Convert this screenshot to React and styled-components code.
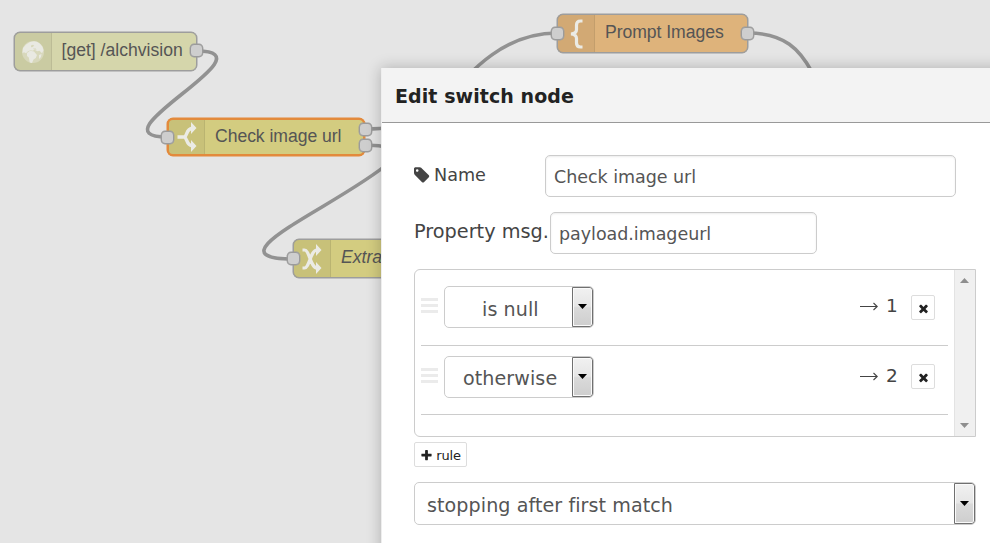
import React from 'react';
import styled, { createGlobalStyle, css } from 'styled-components';

const Global = createGlobalStyle`
  * { box-sizing: border-box; }
  body { margin: 0; background: #e5e5e5; overflow: hidden; }
`;

const verdana = css`font-family: Verdana, "DejaVu Sans", sans-serif;`;

const Workspace = styled.main`
  position: relative;
  width: 990px;
  height: 543px;
  overflow: hidden;
  background: #e5e5e5;
`;

const Wires = styled.svg`
  position: absolute;
  inset: 0;
  fill: none;
  stroke: #929292;
  stroke-width: 3.6;
`;

const NodeBox = styled.div`
  position: absolute;
  left: ${(p) => p.$x}px;
  top: ${(p) => p.$y}px;
  width: ${(p) => p.$w}px;
  height: ${(p) => p.$h || 39}px;
  display: flex;
  border: ${(p) => (p.$selected ? '2px solid #e38a3c' : '1px solid #9d9d9d')};
  box-shadow: 0 0 0 0.5px ${(p) => (p.$selected ? '#e38a3c' : '#9d9d9d')};
  border-radius: 6px;
  background: ${(p) => p.$fill};
`;

const NodeIcon = styled.div`
  display: flex;
  align-items: center;
  justify-content: center;
  flex: none;
  width: ${(p) => p.$w}px;
  background: rgba(0, 0, 0, 0.05);
  border-right: 1px solid rgba(0, 0, 0, 0.07);
  border-radius: 4px 0 0 4px;
  svg { display: block; flex: none; }
`;

const NodeLabel = styled.span`
  padding: ${(p) => p.$pt}px 0 0 ${(p) => p.$pl}px;
  font: ${(p) => (p.$italic ? 'italic' : 'normal')} 17.6px/20px "Liberation Sans", Arial, sans-serif;
  letter-spacing: ${(p) => p.$ls || 0}px;
  color: #555;
  white-space: nowrap;
`;

const Port = styled.i`
  position: absolute;
  left: ${(p) => p.$x}px;
  top: ${(p) => p.$y}px;
  width: 13px;
  height: 13px;
  border: 1px solid #9b9b9b;
  box-shadow: 0 0 0 0.4px #9b9b9b;
  border-radius: 4px;
  background: #cecece;
`;

const Dialog = styled.section`
  position: absolute;
  left: 381px;
  top: 68px;
  width: 640px;
  height: 520px;
  border-left: 1px solid #eee;
  background: #fff;
  box-shadow: 0 0 14px rgba(0, 0, 0, 0.24);
  ${verdana}
  color: #444;
`;

const Header = styled.header`
  height: 55px;
  padding: 16px 0 0 13px;
  background: #f3f3f3;
  border-bottom: 1px solid #999;
`;

const Title = styled.h1`
  margin: 0;
  font-size: 19px;
  line-height: 24px;
  letter-spacing: 0.08px;
  color: #222;
`;

const Form = styled.form`
  width: 594px;
  padding: 32px 0 0 32px;
`;

const Field = styled.div`
  display: flex;
  height: 42px;
  margin-bottom: 15px;
`;

const Label = styled.label`
  display: flex;
  flex: none;
  width: ${(p) => p.$w}px;
  padding-top: 8px;
  font-size: ${(p) => p.$size}px;
  line-height: 24px;
  white-space: nowrap;
  svg { margin: 3px 2px 0 0; }
`;

const Input = styled.input`
  width: ${(p) => p.$w}px;
  height: 42px;
  padding: 1px 8px 0;
  border: 1px solid #ccc;
  border-radius: 5px;
  outline: 0;
  background: #fff;
  box-shadow: inset 0 1px 2px rgba(0, 0, 0, 0.08);
  ${verdana}
  font-size: 17.5px;
  letter-spacing: -0.04px;
  color: #555;
`;

const RuleList = styled.div`
  display: flex;
  width: 562px;
  height: 168px;
  border: 1px solid #ccc;
  border-radius: 6px 0 0 6px;
`;

const Rules = styled.div`
  width: 527px;
  margin-left: 6px;
`;

const Rule = styled.div`
  display: flex;
  height: ${(p) => p.$h}px;
  padding-top: ${(p) => p.$pt}px;
  border-bottom: 1px solid #ccc;
`;

const Handle = styled.i`
  flex: none;
  width: 17px;
  height: 15px;
  margin: 12px 6px 0 0;
  background: repeating-linear-gradient(#ebebeb 0 3px, transparent 3px 6px);
`;

const SelectBox = styled.div`
  display: flex;
  flex: none;
  width: ${(p) => p.$w}px;
  height: ${(p) => p.$h}px;
  border: 1px solid #ccc;
  border-radius: 5px;
  overflow: hidden;
  font-size: 19.1px;
  line-height: 24px;
  color: #555;
`;

const SelectText = styled.span`
  flex: 1;
  padding: ${(p) => p.$pt}px 0 0 ${(p) => p.$pl}px;
  letter-spacing: 0.08px;
  white-space: nowrap;
`;

const DropButton = styled.span`
  display: flex;
  align-items: center;
  justify-content: center;
  width: 21px;
  padding-bottom: 1px;
  border: 1px solid #707070;
  border-radius: 0 3px 3px 0;
  box-shadow: inset 0 0 0 1px #fafafa;
  background: linear-gradient(#f1f1f1, #e6e6e6 48%, #dadada 52%, #cecece);
`;

const Output = styled.span`
  display: flex;
  width: 51px;
  margin-left: 266px;
  padding-top: 8px;
  font-size: 18.5px;
  line-height: 24px;
  svg { margin: 8px 8px 0 0; flex: none; }
`;

const SmallButton = styled.button`
  display: flex;
  align-items: center;
  justify-content: center;
  width: ${(p) => p.$w}px;
  height: 25px;
  margin: ${(p) => p.$mt}px 0 0;
  padding: 1px 0 0;
  gap: 3px;
  border: 1px solid #ddd;
  border-radius: 2px;
  background: #fff;
  ${verdana}
  font-size: 13px;
  letter-spacing: -0.2px;
  color: #222;
`;

const Scrollbar = styled.div`
  display: flex;
  flex-direction: column;
  justify-content: space-between;
  align-items: center;
  width: 21px;
  margin-left: 6px;
  padding: 8px 2px 8px 0;
  background: #f0f0f0;
  border-left: 1px solid #e3e3e3;
`;

const Spacer = styled.div`
  height: 15px;
`;

const PATHS = {
  tag: 'M448 448q0-53-37.5-90.5t-90.5-37.5-90.5 37.5-37.5 90.5 37.5 90.5 90.5 37.5 90.5-37.5 37.5-90.5zm1067 576q0 53-37 90l-491 492q-39 37-91 37-53 0-90-37l-715-716q-38-37-64.5-101t-26.5-117v-416q0-52 38-90t90-38h416q53 0 117 26.5t102 64.5l715 714q37 39 37 91z',
  plus: 'M1600 736v192q0 40-28 68t-68 28h-416v416q0 40-28 68t-68 28h-192q-40 0-68-28t-28-68v-416h-416q-40 0-68-28t-28-68v-192q0-40 28-68t68-28h416v-416q0-40 28-68t68-28h192q40 0 68 28t28 68v416h416q40 0 68 28t28 68z',
  times: 'M1490 1322q0 40-28 68l-136 136q-28 28-68 28t-68-28l-294-294-294 294q-28 28-68 28t-68-28l-136-136q-28-28-28-68t28-68l294-294-294-294q-28-28-28-68t28-68l136-136q28-28 68-28t68 28l294 294 294-294q28-28 68-28t68 28l136 136q28 28 28 68t-28 68l-294 294 294 294q28 28 28 68z',
};

const Glyph = ({ name, size }) => (
  <svg width={size} height={size} viewBox="0 0 1792 1792" fill="currentColor"><path d={PATHS[name]} /></svg>
);

const Globe = () => (
  <svg width="24" height="24" viewBox="0 0 24 24">
    <circle cx="12" cy="12" r="11" fill="#d8d8bc" />
    <path fill="#e9e9e2" d="M2 8L5 4.500 9 2l4-.8 3 .6 3 2 2.500 3 1 3.500-1.500 3-2.500-2.500-2 .5-3-1.500-2 1-2-.5-2.500 1-2 2-2-1-1.500 1zM6 13l3-2.300 4 .8 3 3.400-1.200 3-2.300 1.500-1.500 3.600-2.200-.6-1-4.900L6 16zM18 15l2.500-1-.5 3-2 2z" />
    <path fill="#d8d8bc" d="M10 5.500l2-.7 1.200 1-1.500 1.200-1.700.2zM12 8.600h2.800l.7 1.100-2.500-.1z" />
  </svg>
);

const Fork = () => (
  <svg width="22" height="30" viewBox="0 0 22 30" fill="none" stroke="#ebebe5" strokeWidth="3.4">
    <path d="M1.500 15h7M8 15.500C11.500 14 10 7 16 6.200M8 14.500C11.500 16 10 23 16 23.800" />
    <path d="M15 0l5.500 6L15 12zM15 18l5.500 6L15 30z" fill="#ebebe5" stroke="none" />
  </svg>
);

const Shuffle = () => (
  <svg width="22" height="30" viewBox="0 0 22 30" fill="none" stroke="#ebebe5" strokeWidth="3.2">
    <path d="M1.500 6h2C8.500 6 9.500 24 16 24M1.500 24h2C8.500 24 9.500 6 16 6" />
    <path d="M15 0l5.500 6L15 12zM15 18l5.500 6L15 30z" fill="#ebebe5" stroke="none" />
  </svg>
);

const Brace = () => (
  <svg width="16" height="30" viewBox="0 0 16 30" fill="none" stroke="#ebebe5" strokeWidth="3.2">
    <path d="M14.500 2h-2q-4 0-4 4v4.500q0 4-5.500 4.500 5.500.500 5.500 4.500v4.500q0 4 4 4h2" />
  </svg>
);

const Caret = () => (
  <svg width="9" height="5" viewBox="0 0 9 5"><path d="M0 0h9L4.5 5z" fill="#000" /></svg>
);

const ScrollArrow = ({ down }) => (
  <svg width="9" height="5" viewBox="0 0 9 5"><path d={down ? 'M0 0h9L4.5 5z' : 'M0 5h9L4.5 0z'} fill="#8e8e8e" /></svg>
);

const Arrow = () => (
  <svg width="18" height="9" viewBox="0 0 18 9" fill="none" stroke="#444" strokeWidth="1.1"><path d="M0 4.5h17M13.5 1l3.7 3.5L13.5 8" /></svg>
);

const RULES = [
  { text: 'is null', pl: 37, h: 76, pt: 16, textTop: 11, buttonTop: 9, out: 1 },
  { text: 'otherwise', pl: 18, h: 69, pt: 10, textTop: 10, buttonTop: 8, out: 2 },
];

export default function App() {
  return (
    <Workspace>
      <Global />
      <Wires width="990" height="543">
        <path d="M197 51C275 51 89 137 167 137" />
        <path d="M365 129q16 0 27-2" />
        <path d="M438 110C473 65 508 33 557 33" />
        <path d="M748 33C785 33 800 50 812 72" />
        <path d="M293 259C205 259 340 205 390 162" />
        <path d="M365 145q14 0 27 3" />
      </Wires>
      <NodeBox $x={13.5} $y={32} $w={183} $fill="#d5d6ab">
        <NodeIcon $w={37}><Globe /></NodeIcon>
        <NodeLabel $pl={10} $pt={7}>[get] /alchvision</NodeLabel>
      </NodeBox>
      <NodeBox $x={167} $y={118} $w={198} $h={38} $fill="#d3cc80" $selected>
        <NodeIcon $w={36}><Fork /></NodeIcon>
        <NodeLabel $pl={10} $pt={6} $ls={-0.05}>Check image url</NodeLabel>
      </NodeBox>
      <NodeBox $x={293} $y={239} $w={184} $fill="#d3cc80">
        <NodeIcon $w={37}><Shuffle /></NodeIcon>
        <NodeLabel $pl={10} $pt={7} $italic>Extract image</NodeLabel>
      </NodeBox>
      <NodeBox $x={557} $y={14} $w={191} $fill="#deb37b">
        <NodeIcon $w={37}><Brace /></NodeIcon>
        <NodeLabel $pl={10} $pt={7} $ls={-0.05}>Prompt Images</NodeLabel>
      </NodeBox>
      <Port $x={190} $y={44} />
      <Port $x={161} $y={131} />
      <Port $x={359} $y={123} />
      <Port $x={359} $y={139} />
      <Port $x={287} $y={252} />
      <Port $x={551} $y={27} />
      <Port $x={741} $y={27} />

      <Dialog>
        <Header><Title>Edit switch node</Title></Header>
        <Form>
          <Field>
            <Label $w={131} $size={17.6}><Glyph name="tag" size={18} />Name</Label>
            <Input $w={411} defaultValue="Check image url" />
          </Field>
          <Field>
            <Label $w={136} $size={19.3}>Property msg.</Label>
            <Input $w={267} defaultValue="payload.imageurl" />
          </Field>
          <RuleList>
            <Rules>
              {RULES.map((r) => (
                <Rule key={r.out} $h={r.h} $pt={r.pt}>
                  <Handle />
                  <SelectBox $w={150} $h={42}>
                    <SelectText $pl={r.pl} $pt={r.textTop}>{r.text}</SelectText>
                    <DropButton><Caret /></DropButton>
                  </SelectBox>
                  <Output><Arrow />{r.out}</Output>
                  <SmallButton type="button" $w={24} $mt={r.buttonTop}><Glyph name="times" size={13} /></SmallButton>
                </Rule>
              ))}
            </Rules>
            <Scrollbar><ScrollArrow /><ScrollArrow down /></Scrollbar>
          </RuleList>
          <SmallButton type="button" $w={53} $mt={5}><Glyph name="plus" size={13} />rule</SmallButton>
          <Spacer />
          <SelectBox $w={562} $h={43}>
            <SelectText $pl={12} $pt={11}>stopping after first match</SelectText>
            <DropButton><Caret /></DropButton>
          </SelectBox>
        </Form>
      </Dialog>
    </Workspace>
  );
}
